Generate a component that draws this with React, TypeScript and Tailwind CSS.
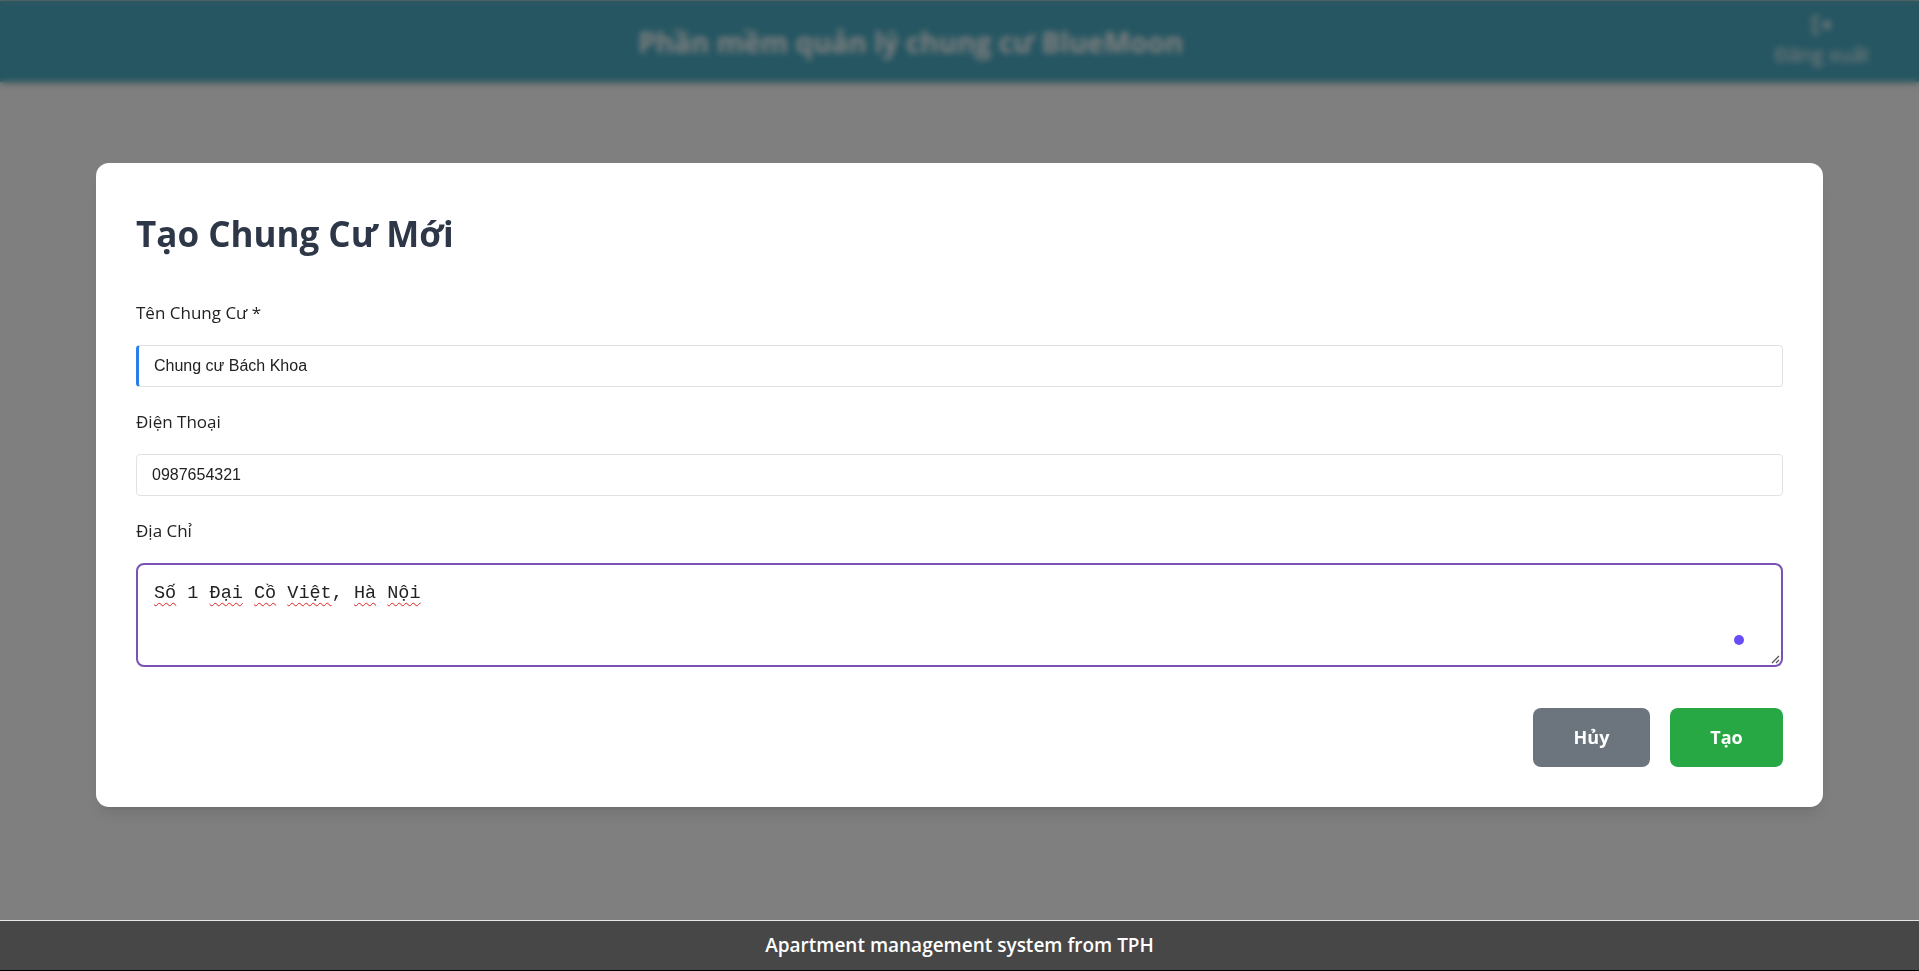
import { useState } from "react";

const words = ["Số", "1", "Đại", "Cồ", "Việt,", "Hà", "Nội"];

const App = () => {
  const [name, setName] = useState("Chung cư Bách Khoa");
  const [phone, setPhone] = useState("0987654321");

  return (
    <div className="relative flex h-screen flex-col bg-white font-['Open_Sans',sans-serif]">
      {/* Header */}
      <header className="flex h-[82px] shrink-0 items-center border-t border-[#d0d0d0] bg-[#4aacc4] pr-12 pl-12 text-white shadow-md">
        <div className="flex-1 text-center text-[28px] font-bold">
          Phần mềm quản lý chung cư BlueMoon
        </div>
        <div className="flex w-[98px] flex-col items-center gap-1">
          <svg width="22" height="22" viewBox="0 0 24 24" fill="none" stroke="currentColor" strokeWidth="2.5">
            <path d="M9 21H5a2 2 0 0 1-2-2V5a2 2 0 0 1 2-2h4" />
            <path d="M16 17l5-5-5-5" />
            <path d="M21 12H9" />
          </svg>
          <span className="text-[20px] whitespace-nowrap">Đăng xuất</span>
        </div>
      </header>

      <main className="flex-1" />

      {/* Footer */}
      <footer className="relative z-50 flex h-[51px] shrink-0 items-center justify-center border-t border-b border-t-[#e6e6e6] border-b-black bg-[#474747] text-[19px] font-semibold text-white">
        Apartment management system from TPH
      </footer>

      {/* Modal overlay */}
      <div className="fixed inset-0 z-40 bg-black/50 backdrop-blur-[3px]">
        <div className="mt-[163px] mr-[96px] ml-[96px] rounded-[13px] bg-white p-10 shadow-lg">
          <h2 className="mt-[10px] mb-[46px] text-[35px] leading-[42px] font-bold text-[#2d3748]">
            Tạo Chung Cư Mới
          </h2>

          <div className="mb-[23px]">
            <label className="mb-5 block text-[17px] leading-6 text-[#222]">Tên Chung Cư *</label>
            <input
              value={name}
              onChange={(e) => setName(e.target.value)}
              className="block h-[42px] w-full rounded-[4px] border border-l-[3px] border-[#e2e2e2] border-l-[#2b7de9] pr-4 pl-[15px] font-['Liberation_Sans',sans-serif] text-[16px] text-[#222] outline-none"
            />
          </div>

          <div className="mb-[23px]">
            <label className="mb-5 block text-[17px] leading-6 text-[#222]">Điện Thoại</label>
            <input
              value={phone}
              onChange={(e) => setPhone(e.target.value)}
              className="block h-[42px] w-full rounded-[4px] border border-[#e2e2e2] pr-4 pl-[15px] font-['Liberation_Sans',sans-serif] text-[16px] text-[#222] outline-none"
            />
          </div>

          <div>
            <label className="mb-5 block text-[17px] leading-6 text-[#222]">Địa Chỉ</label>
            <div className="relative h-[104px] w-full rounded-[8px] border-2 border-[#7952b3] pt-[15px] pl-4 font-['Liberation_Mono',monospace] text-[18.5px] text-[#222]">
              {words.map((w, i) => (
                <span key={i}>
                  {w === "1" ? (
                    w
                  ) : (
                    <span className="underline decoration-[#e02020] decoration-wavy decoration-1 underline-offset-4">
                      {w.replace(",", "")}
                    </span>
                  )}
                  {w.endsWith(",") ? "," : ""}
                  {i < words.length - 1 ? " " : ""}
                </span>
              ))}
              {/* extension indicator */}
              <span className="absolute right-[37px] bottom-[20px] h-[10px] w-[10px] rounded-full bg-[#6a4cf5]" />
              {/* resize grip */}
              <svg className="absolute right-[1px] bottom-[1px]" width="9" height="9" viewBox="0 0 9 9" stroke="#555" strokeWidth="1.2">
                <path d="M8 1L1 8" />
                <path d="M8 5L5 8" />
              </svg>
            </div>
          </div>

          <div className="mt-[41px] flex justify-end gap-5">
            <button className="h-[59px] w-[117px] rounded-[8px] bg-[#6c757d] text-[18px] font-bold text-white">
              Hủy
            </button>
            <button className="h-[59px] w-[113px] rounded-[8px] bg-[#28a745] text-[18px] font-bold text-white">
              Tạo
            </button>
          </div>
        </div>
      </div>
    </div>
  );
};

export default App;
